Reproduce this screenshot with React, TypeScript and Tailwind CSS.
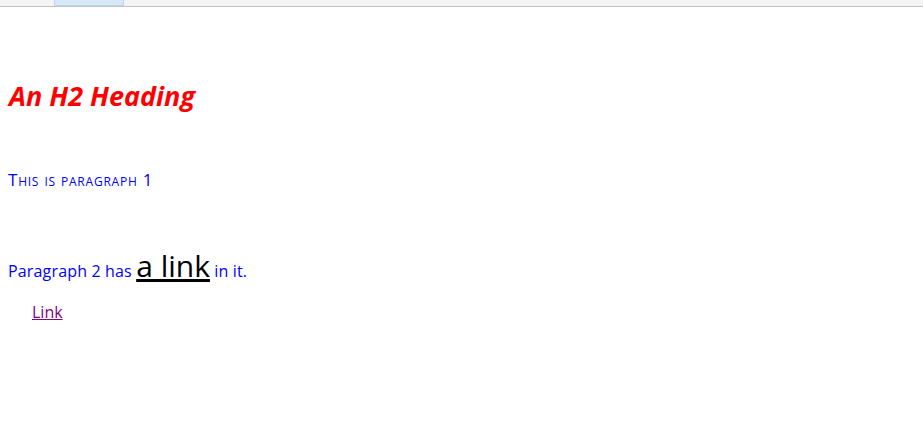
export default function App() {
  return (
    <div className="w-[923px] h-[439px] bg-white overflow-hidden font-['Open_Sans',sans-serif]">
      {/* tab strip */}
      <div className="h-[7px] bg-[#f4f4f4] border-b border-[#c3c3c3] flex">
        <div className="ml-[54px] w-[70px] h-[6px] bg-[#d9e8f7] border border-t-0 border-[#bcd6f0]" />
      </div>

      <div className="px-2">
        <h2 className="mt-[73px] pl-px text-[27px] leading-[32px] font-bold italic text-[#ff0000]">
          An H2 Heading
        </h2>

        <p className="mt-[58px] text-[17px] leading-[20px] tracking-[0.045em] text-[#0000ff] [font-variant:small-caps]">
          This is paragraph 1
        </p>

        <p className="mt-[60px] text-[16px] leading-[32px] text-[#0000ff] tracking-[0.01em]">
          Paragraph 2 has{' '}
          <a href="#" className="text-[30px] text-black underline tracking-normal">
            a link
          </a>{' '}
          in it.
        </p>

        <div className="mt-[15px] pl-6 text-[16px] leading-[20px]">
          <a href="#" className="text-[#800080] underline">
            Link
          </a>
        </div>
      </div>
    </div>
  )
}
